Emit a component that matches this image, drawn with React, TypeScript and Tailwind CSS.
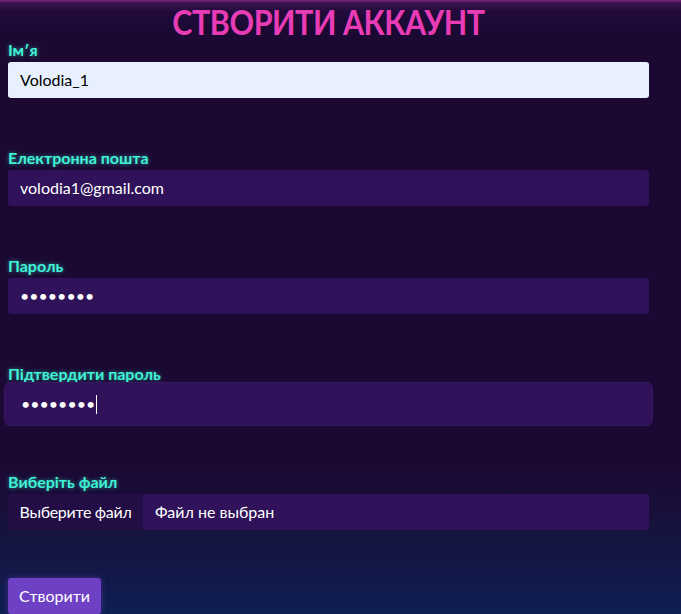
const font = { fontFamily: 'Lato, "Open Sans", sans-serif' };

function Label({ children }: { children: React.ReactNode }) {
  return (
    <div className="h-[22px] text-[16px] leading-[19px] font-bold text-[#3ff2d6] [text-shadow:0_0_4px_rgba(63,242,214,0.55)]">
      {children}
    </div>
  );
}

function Field({ value, light }: { value: string; light?: boolean }) {
  return (
    <div
      className={`h-9 rounded-[3px] px-3 flex items-center text-base ${
        light ? 'bg-[#e8f0fe] text-black' : 'bg-[#2f1259] text-white'
      }`}
    >
      {value}
    </div>
  );
}

export default function App() {
  return (
    <div
      className="min-h-screen w-full bg-[linear-gradient(to_bottom,#7a2577_0px,#3a1250_3px,#210b3a_12px,#1b0933_30px,#1b0933_470px,#151440_540px,#0e1f52_614px)]"
      style={font}
    >
      <form className="w-[657px] px-2 flex flex-col">
        <h1 className="h-10 text-center text-[35px] leading-[42px] font-bold tracking-[-0.5px] scale-x-[0.87] text-[#e83cb6]">
          СТВОРИТИ АККАУНТ
        </h1>

        <Label>Ім′я</Label>
        <Field value="Volodia_1" light />

        <div className="h-[50px]" />
        <Label>Електронна пошта</Label>
        <Field value="volodia1@gmail.com" />

        <div className="h-[50px]" />
        <Label>Пароль</Label>
        <Field value="••••••••" />

        <div className="h-[50px]" />
        <Label>Підтвердити пароль</Label>
        <div className="-mx-1 -my-1 h-11 rounded-md bg-[#2f1259] border border-[#36165f] px-4 flex items-center text-base text-white">
          <span>••••••••</span>
          <span className="ml-px w-px h-[19px] bg-white" />
        </div>

        <div className="h-[50px]" />
        <Label>Виберіть файл</Label>
        <div className="h-9 rounded-[3px] bg-[#2f1259] flex items-center text-base text-white overflow-hidden">
          <div className="h-full w-[135px] bg-[#230d44] flex items-center justify-center tracking-[-0.3px]">
            Выберите файл
          </div>
          <span className="pl-3">Файл не выбран</span>
        </div>

        <div className="h-12" />
        <div>
          <button
            type="button"
            className="h-9 w-[93px] rounded-[3px] bg-[#6e40c4] text-white text-base shadow-[0_0_6px_rgba(110,64,196,0.5)]"
          >
            Створити
          </button>
        </div>
      </form>
    </div>
  );
}
